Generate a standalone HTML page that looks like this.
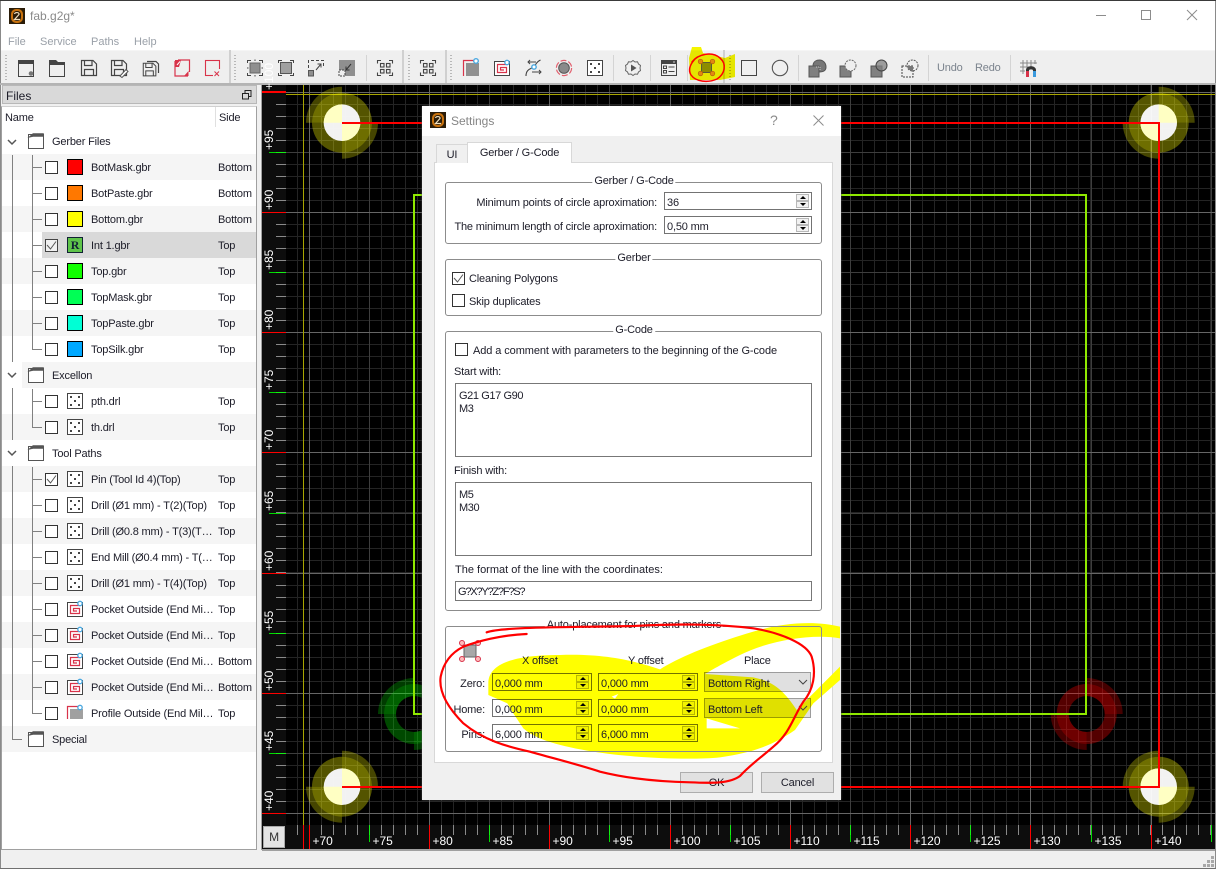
<!DOCTYPE html>
<html lang="en"><head><meta charset="utf-8"><title>fab.g2g*</title>
<style>
*{box-sizing:border-box;margin:0;padding:0}
html,body{width:1216px;height:869px;overflow:hidden;background:#f0f0f0}
body{position:relative;font:11px "Liberation Sans",sans-serif;letter-spacing:-.17px;color:#1c1c28}
.a{position:absolute}
.t{position:absolute;white-space:nowrap;line-height:14px;margin-top:1px}
svg{display:block;overflow:visible}
.r{position:absolute;left:2px;width:254px;height:26px;line-height:28px;white-space:nowrap}
.alt{background:#f5f5f5}
.c{position:absolute;left:43px;top:7px;width:13px;height:13px;border:1px solid #333;background:#fff}
.ic{position:absolute;left:65px;top:5px;width:16px;height:16px}
.sw{position:absolute;left:65px;top:5px;width:16px;height:16px;border:1px solid #000}
.n{position:absolute;left:89px;top:0;max-width:124px;overflow:hidden}
.s{position:absolute;left:216px;top:0}
.fo{position:absolute;left:26px;top:5px;width:16px;height:16px}
.g{position:absolute;left:50px;top:0}
.gb{position:absolute;border:1px solid #8c8c8c;border-radius:3px}
.gt{position:absolute;white-space:nowrap;line-height:14px;background:#fff;padding:0 2px;margin-top:1px;transform:translateX(-50%)}
.in{position:absolute;border:1px solid #777;line-height:16px;padding-left:2px;white-space:nowrap}
.sp{line-height:18px;padding-top:1px;border-color:rgba(0,0,0,.55)}
.sp u{position:absolute;right:2px;width:13px;height:7px;background:rgba(0,0,0,.05);border:1px solid rgba(0,0,0,.24);display:block}
.sp u:first-of-type{top:1px}
.sp u:last-of-type{bottom:1px}
.sp u::after{content:"";position:absolute;left:3px;top:1px;border-left:3px solid transparent;border-right:3px solid transparent}
.sp u:first-of-type::after{border-bottom:3px solid #000}
.sp u:last-of-type::after{border-top:3px solid #000}
.cb{position:absolute;background:rgba(0,0,0,.12);border:1px solid rgba(0,0,0,.3);line-height:20px;padding:1px 0 0 3px;width:107px;height:20px}
.btn{position:absolute;background:#e1e1e1;border:1px solid #adadad;text-align:center;line-height:21px;height:21px}
.tb{position:absolute;top:59px;width:18px;height:18px}
.grip{position:absolute;top:55px;width:3px;height:25px;background-image:linear-gradient(#b8b8b8 1px,transparent 1px);background-size:2px 3px;background-repeat:repeat-y}
.sep{position:absolute;top:55px;width:1px;height:26px;background:#d4d4d4}
.ep{position:absolute;top:50px;width:2px;height:33px;background:#d0d0d0}
</style></head><body>

<svg width="0" height="0" style="position:absolute"><defs>
<g id="fold" fill="none"><path d="M.5 15.500V1.500H15.500V15.500Z" fill="#fff" stroke="#555"/><path d="M.5 4.500L5 .5H15.500V3.500H5Z" fill="#555" stroke="#555" stroke-width=".6"/></g>
<g id="die"><rect x=".5" y=".5" width="15" height="15" fill="#fff" stroke="#444"/><g fill="#444"><rect x="3" y="3" width="2" height="2"/><rect x="11" y="3" width="2" height="2"/><rect x="7" y="7" width="2" height="2"/><rect x="3" y="11" width="2" height="2"/><rect x="11" y="11" width="2" height="2"/></g></g>
<g id="pock"><rect x=".5" y="1.500" width="15" height="14" fill="#fff" stroke="#444"/><path d="M12.500 4.500H3.500V12.500H12.500V7.500H6.500V10H10" fill="none" stroke="#d8334a" stroke-width="1.200"/><circle cx="13" cy="2.500" r="2.200" fill="#fff" stroke="#4aa8e0" stroke-width="1.300"/></g>
<g id="prof"><path d="M.5 14V1.500H11" fill="none" stroke="#d8334a" stroke-width="1.200"/><rect x="3" y="4" width="13" height="10" fill="#a0a0a0"/><circle cx="13" cy="2.500" r="2.200" fill="#fff" stroke="#4aa8e0" stroke-width="1.300"/></g>
<g id="logo"><rect width="16" height="16" fill="#2a1c08"/><rect x="2" y="1" width="12" height="14" rx="5" fill="#c8720e"/><rect x="4" y="3" width="8" height="10" rx="3.500" fill="#2a1c08"/><path d="M5.500 6C6 4 10.500 4 10 6.500L5.500 11.500H11" fill="none" stroke="#f0e0c0" stroke-width="1.200"/></g>
<g id="floppy" fill="none" stroke="#444" stroke-width="1.200"><path d="M1.500 1.500H13L16.500 5V16.500H1.500Z"/><path d="M4.500 1.500V6.500H12V1.500M4.500 16.500V10.500H13.500V16.500"/></g>
<g id="four" fill="none" stroke="#444" stroke-width="1.100"><path d="M.5 3.500V.5H4M12 .5H15.500V3.500M.5 12.500V15.500H4M12 15.500H15.500V12.500"/><rect x="3.500" y="3.500" width="3.500" height="3.500"/><rect x="9.500" y="3.500" width="3.500" height="3.500"/><rect x="3.500" y="9.500" width="3.500" height="3.500"/><rect x="9.500" y="9.500" width="3.500" height="3.500"/></g>
<g id="pad">
<path fill-opacity=".33" d="M0-18A18 18 0 0 1 18 0H30A30 30 0 0 0 0-30Z M0 18A18 18 0 0 1-18 0H-30A30 30 0 0 0 0 30Z"/>
<path fill-opacity=".43" d="M0-18A18 18 0 0 0-18 0H-30A30 30 0 0 1 0-30Z M0 18A18 18 0 0 0 18 0H30A30 30 0 0 1 0 30Z"/>
<path fill-opacity=".27" d="M-30 0H-36A36 36 0 0 1 0-36V-30A30 30 0 0 0-30 0Z M30 0H36A36 36 0 0 1 0 36V30A30 30 0 0 0 30 0Z"/>
</g>
<g id="hole"><circle r="18.300" fill="#fff" fill-opacity=".95"/><path d="M0 0V-18.300A18.300 18.300 0 0 0-18.300 0Z M0 0V18.300A18.300 18.300 0 0 0 18.300 0Z" fill="#ffffc0" fill-opacity=".95"/></g>
</defs></svg>

<!-- window frame -->
<div class="a" style="left:0;top:0;width:1216px;height:1px;background:#3a3a3a"></div>
<div class="a" style="left:0;top:1px;width:1216px;height:49px;background:#fff"></div>
<div class="a" style="left:0;top:1px;width:1px;height:868px;background:#8a8a8a"></div>
<div class="a" style="left:1215px;top:1px;width:1px;height:868px;background:#8a8a8a"></div>
<div class="a" style="left:0;top:868px;width:1216px;height:1px;background:#707070"></div>

<svg class="a" style="left:9px;top:8px;width:16px;height:16px"><use href="#logo"/></svg>
<div class="t" style="left:30px;top:8px;color:#8a8a8a;font-size:12px;letter-spacing:0">fab.g2g*</div>
<div class="t" style="left:8px;top:34px;color:#9aa0a8;letter-spacing:0">File</div>
<div class="t" style="left:40px;top:34px;color:#9aa0a8;letter-spacing:0">Service</div>
<div class="t" style="left:91px;top:34px;color:#9aa0a8;letter-spacing:0">Paths</div>
<div class="t" style="left:134px;top:34px;color:#9aa0a8;letter-spacing:0">Help</div>
<svg class="a" style="left:0;top:0;width:1216px;height:30px" fill="none" stroke="#8c8c8c"><path d="M1096 15.500H1106"/><rect x="1141.500" y="10.500" width="9" height="9"/><path d="M1187 10L1197 20M1197 10L1187 20"/></svg>

<!-- toolbar -->
<div class="a" style="left:1px;top:50px;width:1214px;height:33px;background:#efefef;border-top:1px solid #f5f5f5"></div>
<div class="a" style="left:0;top:83px;width:1216px;height:2px;background:#b4b4b4"></div>
<div class="grip" style="left:5px"></div><div class="ep" style="left:229px"></div>
<div class="grip" style="left:234px"></div><div class="sep" style="left:366px"></div><div class="ep" style="left:402px"></div>
<div class="grip" style="left:408px"></div><div class="ep" style="left:445px"></div>
<div class="grip" style="left:450px"></div><div class="sep" style="left:613px"></div><div class="sep" style="left:650px"></div><div class="sep" style="left:687px"></div><div class="ep" style="left:723px"></div>
<div class="grip" style="left:729px"></div><div class="sep" style="left:798px"></div><div class="sep" style="left:928px"></div><div class="sep" style="left:1010px"></div>

<svg class="tb" style="left:18px"><path d="M.5 2.500H15.500V17.500H.5Z" fill="none" stroke="#444"/><rect y="1" width="16" height="4" fill="#444"/><circle cx="13" cy="14.500" r="2.300" fill="#777"/></svg>
<svg class="tb" style="left:49px"><path d="M.5 3.500H15.500V17.500H.5Z" fill="none" stroke="#444"/><path d="M0 1H7L9 3H16V6H0Z" fill="#444"/></svg>
<svg class="tb" style="left:80px"><use href="#floppy"/></svg>
<svg class="tb" style="left:110px"><use href="#floppy"/><path d="M10 17L16 10.500L18 12.500L12 18.500Z" fill="#fff" stroke="#555"/></svg>
<svg class="tb" style="left:142px"><g transform="translate(0 3) scale(.84)"><use href="#floppy"/></g><path d="M5 2.500H14L16.500 5V14" fill="none" stroke="#444" stroke-width="1.200"/></svg>
<svg class="tb" style="left:174px"><path d="M1 2V17H14M4 1H15.500V13" fill="none" stroke="#d8334a" stroke-width="1.200"/><path d="M1 1H7L5 8H1ZM10 17H14.500V12Z" fill="#d8334a"/><path d="M3 6L6 2.500" stroke="#fff"/></svg>
<svg class="tb" style="left:205px"><rect x=".5" y="1.500" width="14" height="15" fill="none" stroke="#d8334a" stroke-width="1.100"/><rect x="8" y="10" width="9" height="8" fill="#efefef"/><path d="M9.500 12.500L14 17M14 12.500L9.500 17" stroke="#d8334a"/></svg>

<svg class="tb" style="left:247px"><path d="M.5 4V1.500H4M12 1.500H15.500V4M.5 14V16.500H4M12 16.500H15.500V14" fill="none" stroke="#444"/><rect x="3" y="4" width="10" height="10" fill="#8f8f8f" stroke="#666"/><path d="M8 .5V2M8 16V17.500M0 9H1.500M14.500 9H16" stroke="#444"/></svg>
<svg class="tb" style="left:278px"><path d="M.5 4V1.500H4M12 1.500H15.500V4M.5 14V16.500H4M12 16.500H15.500V14" fill="none" stroke="#444"/><rect x="2.500" y="3.500" width="11" height="11" fill="#a0a0a0" stroke="#555"/></svg>
<svg class="tb" style="left:308px"><path d="M.5 9V1.500H15.500V9" fill="none" stroke="#444" stroke-dasharray="3 2"/><rect x=".5" y="11.500" width="5" height="5.500" fill="#8f8f8f" stroke="#555"/><path d="M8 11L13 5M9.500 5H13V8.500" fill="none" stroke="#444"/></svg>
<svg class="tb" style="left:339px"><rect x="0" y="1" width="16" height="16" fill="#8f8f8f"/><rect x="0" y="11" width="6" height="6" fill="#efefef" stroke="#444" stroke-dasharray="2 1"/><path d="M12 5L7 11M7 7.500V11H10.500" fill="none" stroke="#333"/></svg>
<svg class="tb" style="left:377px"><g transform="translate(0 1)"><use href="#four"/></g></svg>
<svg class="tb" style="left:420px"><g transform="translate(0 1)"><use href="#four"/></g></svg>

<svg class="tb" style="left:463px"><path d="M.5 17V1.500H12" fill="none" stroke="#d8334a" stroke-width="1.200"/><rect x="3" y="4" width="13" height="13" fill="#909090"/><circle cx="13" cy="2" r="2.300" fill="#fff" stroke="#4aa8e0" stroke-width="1.400"/></svg>
<svg class="tb" style="left:494px"><g transform="translate(0 1)"><use href="#pock"/></g></svg>
<svg class="tb" style="left:525px"><path d="M1 17C1 10 6 10 8.500 8C11 6 11 3 15.500 1" fill="none" stroke="#444" stroke-width="1.100"/><circle cx="9" cy="8" r="2.200" fill="#fff" stroke="#4aa8e0" stroke-width="1.400"/><path d="M11 3H3M5 1L3 3L5 5M7 13H16M14 11L16 13L14 15" fill="none" stroke="#444"/></svg>
<svg class="tb" style="left:555px"><circle cx="9" cy="9" r="5.300" fill="#8a8a8a" stroke="#555"/><circle cx="9" cy="9" r="7.600" fill="none" stroke="#e2606e" stroke-width="1.200" stroke-dasharray="6 2"/></svg>
<svg class="tb" style="left:587px"><g transform="translate(0 1)"><use href="#die"/></g></svg>
<svg class="tb" style="left:624px"><path d="M9 1.500L11 3L13.500 2.800L14.500 5L16.500 6.500L16 9L16.500 11.500L14.500 13L13.500 15.200L11 15L9 16.500L7 15L4.500 15.200L3.500 13L1.500 11.500L2 9L1.500 6.500L3.500 5L4.500 2.800L7 3Z" fill="none" stroke="#666"/><path d="M7 5.500L12.500 9L7 12.500Z" fill="#555"/></svg>
<svg class="tb" style="left:661px"><rect x=".5" y="1.500" width="15" height="15" fill="none" stroke="#444"/><rect y="1" width="16" height="4" fill="#444"/><path d="M12 3h2" stroke="#ccc"/><rect x="2.500" y="7" width="3" height="2.500" fill="none" stroke="#444"/><rect x="2.500" y="11.500" width="3" height="2.500" fill="none" stroke="#444"/><path d="M7.500 8H13.500M7.500 12.500H13.500" stroke="#444"/></svg>

<svg class="tb" style="left:741px"><rect x=".5" y="1.500" width="15" height="15" fill="none" stroke="#444"/></svg>
<svg class="tb" style="left:771px"><circle cx="9" cy="9" r="7.700" fill="none" stroke="#555" stroke-width="1.100"/></svg>
<svg class="tb" style="left:808px"><rect x="1" y="7" width="10" height="11" fill="#808080" stroke="#555"/><path d="M5 7C5 2 9 1 11.500 1C15 1 18 4 18 8C18 11 16 13 11 13V7Z" fill="#777" stroke="#555"/><path d="M8 8h4v4" fill="none" stroke="#ccc" stroke-dasharray="1 1"/></svg>
<svg class="tb" style="left:839px"><rect x="1" y="7" width="11" height="11" fill="#808080" stroke="#555"/><circle cx="11.500" cy="6.500" r="5.500" fill="#efefef" stroke="#666" stroke-dasharray="2 1"/></svg>
<svg class="tb" style="left:870px"><rect x="1" y="7" width="11" height="11" fill="#808080" stroke="#555"/><circle cx="11.500" cy="6.500" r="5.500" fill="#808080" fill-opacity=".75" stroke="#444"/></svg>
<svg class="tb" style="left:901px"><rect x="1" y="7" width="11" height="11" fill="none" stroke="#444" stroke-dasharray="2 1"/><circle cx="11.500" cy="6.500" r="5.500" fill="none" stroke="#555" stroke-dasharray="2 1"/><path d="M6.500 7H12V12C9 12 7 10 6.500 7Z" fill="#777"/></svg>
<div class="t" style="left:937px;top:60px;color:#7b838d">Undo</div>
<div class="t" style="left:975px;top:60px;color:#7b838d">Redo</div>
<svg class="tb" style="left:1020px"><path d="M3 1V15M7 1V15M11 1V9M15 1V5M0 4H17M0 8H11M0 12H5" stroke="#888" fill="none"/><path d="M6 16V11C6 6 16 6 16 11V16H13V11.500C13 10 9 10 9 11.500V16Z" fill="#333"/><rect x="6" y="12" width="3" height="6" fill="#d8334a"/><rect x="13" y="12" width="3" height="6" fill="#3a9ade"/></svg>

<!-- left dock -->
<div class="a" style="left:2px;top:85px;width:255px;height:19px;background:#d9d9d9;border:1px solid #b8b8b8"></div>
<div class="t" style="left:6px;top:88px;font-size:12px;letter-spacing:0">Files</div>
<svg class="a" style="left:242px;top:90px;width:10px;height:10px" fill="none" stroke="#222"><rect x="3" y=".5" width="6" height="6" fill="#d9d9d9"/><rect x=".5" y="3.500" width="6" height="5.500" fill="#d9d9d9"/></svg>
<div class="a" style="left:1px;top:106px;width:256px;height:744px;background:#fff;border:1px solid #a0a0a0;border-top-color:#d0d0d0"></div>
<div class="t" style="left:5px;top:110px">Name</div>
<div class="a" style="left:215px;top:107px;width:1px;height:20px;background:#e0e0e0"></div>
<div class="t" style="left:219px;top:110px">Side</div>

<div class="r alt" style="top:154px"><i class="c"></i><b class="sw" style="background:#f00"></b><span class="n">BotMask.gbr</span><span class="s">Bottom</span></div>
<div class="r" style="top:180px"><i class="c"></i><b class="sw" style="background:#ff7800"></b><span class="n">BotPaste.gbr</span><span class="s">Bottom</span></div>
<div class="r alt" style="top:206px"><i class="c"></i><b class="sw" style="background:#ff0"></b><span class="n">Bottom.gbr</span><span class="s">Bottom</span></div>
<div class="r" style="top:232px"><div class="a" style="left:40px;top:0;width:214px;height:26px;background:#d9d9d9"></div><i class="c" style="background:#f0f0f0;border-color:#444"><svg width="11" height="11"><path d="M1 5L4.500 9L10 1.500" fill="none" stroke="#555"/></svg></i><b class="sw" style="background:#5fc44a;border-color:#123;color:#123;font:bold 12px/14px 'Liberation Serif',serif;text-align:center">R</b><span class="n">Int 1.gbr</span><span class="s">Top</span></div>
<div class="r alt" style="top:258px"><i class="c"></i><b class="sw" style="background:#1f0"></b><span class="n">Top.gbr</span><span class="s">Top</span></div>
<div class="r" style="top:284px"><i class="c"></i><b class="sw" style="background:#00ff55"></b><span class="n">TopMask.gbr</span><span class="s">Top</span></div>
<div class="r alt" style="top:310px"><i class="c"></i><b class="sw" style="background:#00ffd5"></b><span class="n">TopPaste.gbr</span><span class="s">Top</span></div>
<div class="r" style="top:336px"><i class="c"></i><b class="sw" style="background:#00a8ff"></b><span class="n">TopSilk.gbr</span><span class="s">Top</span></div>
<div class="r" style="top:128px"><svg class="fo"><use href="#fold"/></svg><span class="g">Gerber Files</span></div>
<div class="r alt" style="top:362px;left:22px;width:234px"><svg class="fo" style="left:6px"><use href="#fold"/></svg><span class="g" style="left:30px">Excellon</span></div>
<div class="r" style="top:388px"><i class="c"></i><svg class="ic"><use href="#die"/></svg><span class="n">pth.drl</span><span class="s">Top</span></div>
<div class="r alt" style="top:414px"><i class="c"></i><svg class="ic"><use href="#die"/></svg><span class="n">th.drl</span><span class="s">Top</span></div>
<div class="r" style="top:440px"><svg class="fo"><use href="#fold"/></svg><span class="g">Tool Paths</span></div>
<div class="r alt" style="top:466px"><i class="c"><svg width="11" height="11"><path d="M1 5L4.500 9L10 1.500" fill="none" stroke="#555"/></svg></i><svg class="ic"><use href="#die"/></svg><span class="n">Pin (Tool Id 4)(Top)</span><span class="s">Top</span></div>
<div class="r" style="top:492px"><i class="c"></i><svg class="ic"><use href="#die"/></svg><span class="n">Drill (Ø1 mm) - T(2)(Top)</span><span class="s">Top</span></div>
<div class="r alt" style="top:518px"><i class="c"></i><svg class="ic"><use href="#die"/></svg><span class="n">Drill (Ø0.8 mm) - T(3)(T…</span><span class="s">Top</span></div>
<div class="r" style="top:544px"><i class="c"></i><svg class="ic"><use href="#die"/></svg><span class="n">End Mill (Ø0.4 mm) - T(…</span><span class="s">Top</span></div>
<div class="r alt" style="top:570px"><i class="c"></i><svg class="ic"><use href="#die"/></svg><span class="n">Drill (Ø1 mm) - T(4)(Top)</span><span class="s">Top</span></div>
<div class="r" style="top:596px"><i class="c"></i><svg class="ic"><use href="#pock"/></svg><span class="n">Pocket Outside (End Mi…</span><span class="s">Top</span></div>
<div class="r alt" style="top:622px"><i class="c"></i><svg class="ic"><use href="#pock"/></svg><span class="n">Pocket Outside (End Mi…</span><span class="s">Top</span></div>
<div class="r" style="top:648px"><i class="c"></i><svg class="ic"><use href="#pock"/></svg><span class="n">Pocket Outside (End Mi…</span><span class="s">Bottom</span></div>
<div class="r alt" style="top:674px"><i class="c"></i><svg class="ic"><use href="#pock"/></svg><span class="n">Pocket Outside (End Mi…</span><span class="s">Bottom</span></div>
<div class="r" style="top:700px"><i class="c"></i><svg class="ic"><use href="#prof"/></svg><span class="n">Profile Outside (End Mil…</span><span class="s">Top</span></div>
<div class="r alt" style="top:726px"><svg class="fo"><use href="#fold"/></svg><span class="g">Special</span></div>

<svg class="a" style="left:0;top:0;width:262px;height:760px" fill="none" stroke="#808080" shape-rendering="crispEdges">
<path d="M12.500 155V362M12.500 388V440M12.500 466V739.500H22"/>
<path d="M32.500 155V349.500H42M33 167.500H42M33 193.500H42M33 219.500H42M33 245.500H42M33 271.500H42M33 297.500H42M33 323.500H42"/>
<path d="M32.500 389V427.500H42M33 401.500H42"/>
<path d="M32.500 467V713.500H42M33 479.500H42M33 505.500H42M33 531.500H42M33 557.500H42M33 583.500H42M33 609.500H42M33 635.500H42M33 661.500H42M33 687.500H42"/>
</svg>
<svg class="a" style="left:0;top:0;width:30px;height:470px" fill="none" stroke="#555" stroke-width="1.500"><path d="M8 140L12 144L16 140M8 373L12 377L16 373M8 451L12 455L16 451"/></svg>

<!-- canvas -->
<div class="a" style="left:261px;top:85px;width:1px;height:765px;background:#a0a0a0"></div>
<div class="a" style="left:262px;top:85px;width:953px;height:764px;background:#000"></div>
<div class="a" style="left:286px;top:85px;width:374px;height:740px;background:linear-gradient(90deg,#242424 1px,transparent 1px) 11px 0/12px 100%"></div>
<div class="a" style="left:660px;top:85px;width:555px;height:740px;background:linear-gradient(90deg,#242424 1px,transparent 1px) 10px 0/12px 100%"></div>
<div class="a" style="left:286px;top:85px;width:929px;height:488px;background:linear-gradient(#242424 1px,transparent 1px) 0 7px/100% 12px"></div>
<div class="a" style="left:286px;top:573px;width:929px;height:252px;background:linear-gradient(#242424 1px,transparent 1px) 0 0/100% 12px"></div>

<svg class="a" style="left:0;top:0;width:1216px;height:869px">
<g fill="none" shape-rendering="crispEdges">
<path stroke="#3e3e3e" d="M369.500 85V825M489.500 85V825M609.500 85V825M730.500 85V825M850.500 85V825M970.500 85V825M1091.500 85V825M1211.500 85V825M286 152.500H1215M286 272.500H1215M286 392.500H1215M286 513.500H1215M286 633.500H1215M286 753.500H1215"/>
<path stroke="#666" d="M309.500 85V825M429.500 85V825M549.500 85V825M670.500 85V825M790.500 85V825M910.500 85V825M1030.500 85V825M1151.500 85V825M286 92.500H1215M286 212.500H1215M286 332.500H1215M286 452.500H1215M286 573.500H1215M286 693.500H1215M286 813.500H1215"/>
<path stroke="#a8a500" d="M303.500 85V825M286 94.500H1215"/>
</g>

<g fill="#ff0">
<use href="#pad" transform="translate(342 122.700)"/><use href="#hole" transform="translate(342 122.700)"/>
<use href="#pad" transform="translate(1158.700 122.700) scale(-1 1)"/><use href="#hole" transform="translate(1158.700 122.700) scale(-1 1)"/>
<use href="#pad" transform="translate(342 786.700) scale(-1 1)"/><use href="#hole" transform="translate(342 786.700) scale(-1 1)"/>
<use href="#pad" transform="translate(1158.700 786.700)"/><use href="#hole" transform="translate(1158.700 786.700)"/>
</g>
<g opacity=".88"><use href="#pad" fill="#0f0" transform="translate(414 714)"/></g>
<use href="#pad" fill="#f00" transform="translate(1086.700 714) scale(-1 1)"/>

<path d="M414 195H1086V714H414Z" fill="none" stroke="#8fe800" stroke-width="2" shape-rendering="crispEdges"/>
<path d="M342 123H1159V787H342" fill="none" stroke="#f00" stroke-width="2" shape-rendering="crispEdges"/>
</svg>

<!-- left ruler -->
<div class="a" style="left:262px;top:85px;width:24px;height:740px;background:#0d0d0d"></div>
<div class="a" style="left:276px;top:85px;width:10px;height:488px;background:linear-gradient(#8a8a8a 1px,transparent 1px) 0 7px/100% 12px"></div>
<div class="a" style="left:276px;top:573px;width:10px;height:252px;background:linear-gradient(#8a8a8a 1px,transparent 1px) 0 0/100% 12px"></div>
<!-- bottom ruler -->
<div class="a" style="left:262px;top:825px;width:953px;height:24px;background:#0d0d0d"></div>
<div class="a" style="left:286px;top:825px;width:374px;height:10px;background:linear-gradient(90deg,#8a8a8a 1px,transparent 1px) 11px 0/12px 100%"></div>
<div class="a" style="left:660px;top:825px;width:555px;height:10px;background:linear-gradient(90deg,#8a8a8a 1px,transparent 1px) 10px 0/12px 100%"></div>

<svg class="a" style="left:0;top:0;width:1216px;height:869px;letter-spacing:0" font-family="Liberation Sans" font-size="12" fill="#fff">
<g fill="none" shape-rendering="crispEdges">
<path stroke="#0f0" stroke-opacity=".85" d="M269 152.500H286M269 272.500H286M269 392.500H286M269 513.500H286M269 633.500H286M269 753.500H286M369.500 825V842M489.500 825V842M609.500 825V842M730.500 825V842M850.500 825V842M970.500 825V842M1091.500 825V842M1211.500 825V842"/>
<path stroke="#f00" d="M262 212.500H286M262 332.500H286M262 452.500H286M262 573.500H286M262 693.500H286M262 813.500H286M303.500 825V849M309.500 825V849M429.500 825V849M549.500 825V849M670.500 825V849M790.500 825V849M910.500 825V849M1030.500 825V849M1151.500 825V849"/>
<path stroke="#f00" stroke-width="2" d="M262 92H286"/>
</g>
<text transform="translate(273 90) rotate(-90)">+100</text>
<text transform="translate(273 150) rotate(-90)">+95</text>
<text transform="translate(273 210) rotate(-90)">+90</text>
<text transform="translate(273 270) rotate(-90)">+85</text>
<text transform="translate(273 330) rotate(-90)">+80</text>
<text transform="translate(273 390) rotate(-90)">+75</text>
<text transform="translate(273 450) rotate(-90)">+70</text>
<text transform="translate(273 511) rotate(-90)">+65</text>
<text transform="translate(273 571) rotate(-90)">+60</text>
<text transform="translate(273 631) rotate(-90)">+55</text>
<text transform="translate(273 691) rotate(-90)">+50</text>
<text transform="translate(273 751) rotate(-90)">+45</text>
<text transform="translate(273 811) rotate(-90)">+40</text>
<text x="312.500" y="845">+70</text><text x="372.500" y="845">+75</text><text x="432.500" y="845">+80</text><text x="492.500" y="845">+85</text><text x="552.500" y="845">+90</text><text x="612.500" y="845">+95</text><text x="673.500" y="845">+100</text><text x="733.500" y="845">+105</text><text x="793.500" y="845">+110</text><text x="853.500" y="845">+115</text><text x="913.500" y="845">+120</text><text x="973.500" y="845">+125</text><text x="1033.500" y="845">+130</text><text x="1094.500" y="845">+135</text><text x="1154.500" y="845">+140</text>
</svg>
<div class="a" style="left:263px;top:826px;width:22px;height:22px;background:#e4e4e4;border:1px solid #aaa;text-align:center;line-height:20px;font-size:12px;color:#333">M</div>

<!-- status bar -->
<div class="a" style="left:262px;top:849px;width:953px;height:2px;background:#a0a0a0"></div>
<svg class="a" style="left:1203px;top:856px;width:12px;height:12px" fill="#a8a8a8"><rect x="8" y="0" width="3" height="3"/><rect x="4" y="4" width="3" height="3"/><rect x="8" y="4" width="3" height="3"/><rect x="0" y="8" width="3" height="3"/><rect x="4" y="8" width="3" height="3"/><rect x="8" y="8" width="3" height="3"/></svg>

<!-- dialog -->
<div class="a" style="left:422px;top:106px;width:419px;height:694px;background:#f0f0f0;box-shadow:0 0 2px #555"></div>
<div class="a" style="left:422px;top:106px;width:419px;height:30px;background:#fff"></div>
<svg class="a" style="left:430px;top:112px;width:16px;height:16px"><use href="#logo"/></svg>
<div class="t" style="left:451px;top:113px;color:#858585;font-size:12px;letter-spacing:0">Settings</div>
<div class="t" style="left:770px;top:112px;color:#8a8a8a;font-size:14px">?</div>
<svg class="a" style="left:813px;top:115px;width:11px;height:11px" fill="none" stroke="#8c8c8c"><path d="M.5 .5L10.500 10.500M10.500 .5L.5 10.500"/></svg>

<div class="a" style="left:434px;top:162px;width:399px;height:601px;background:#fff;border:1px solid #d8d8d8"></div>
<div class="a" style="left:436px;top:144px;width:32px;height:19px;background:#f0f0f0;border:1px solid #d8d8d8;border-bottom:0;text-align:center;line-height:20px">UI</div>
<div class="a" style="left:467px;top:142px;width:105px;height:21px;background:#fff;border:1px solid #d8d8d8;border-bottom:0;text-align:center;line-height:20px">Gerber / G-Code</div>

<div class="gb" style="left:445px;top:182px;width:377px;height:62px"></div>
<div class="gt" style="left:634px;top:173px">Gerber / G-Code</div>
<div class="t" style="right:559px;top:195px">Minimum points of circle aproximation:</div>
<div class="t" style="right:559px;top:219px">The minimum length of circle aproximation:</div>
<div class="in sp" style="left:664px;top:192px;width:148px;height:18px">36<u></u><u></u></div>
<div class="in sp" style="left:664px;top:216px;width:148px;height:18px">0,50 mm<u></u><u></u></div>

<div class="gb" style="left:445px;top:259px;width:377px;height:57px"></div>
<div class="gt" style="left:634px;top:250px">Gerber</div>
<div class="c" style="left:452px;top:272px"><svg width="11" height="11"><path d="M1 5L4.500 9L10 1.500" fill="none" stroke="#555"/></svg></div>
<div class="t" style="left:469px;top:271px">Cleaning Polygons</div>
<div class="c" style="left:452px;top:294px"></div>
<div class="t" style="left:469px;top:294px">Skip duplicates</div>

<div class="gb" style="left:445px;top:331px;width:377px;height:280px"></div>
<div class="gt" style="left:634px;top:322px">G-Code</div>
<div class="c" style="left:455px;top:343px"></div>
<div class="t" style="left:473px;top:343px;letter-spacing:-.09px">Add a comment with parameters to the beginning of the G-code</div>
<div class="t" style="left:454px;top:364px">Start with:</div>
<div class="in" style="left:455px;top:383px;width:357px;height:74px;padding:6px 3px;line-height:13px;letter-spacing:-.4px">G21 G17 G90<br>M3</div>
<div class="t" style="left:454px;top:463px">Finish with:</div>
<div class="in" style="left:455px;top:482px;width:357px;height:74px;padding:6px 3px;line-height:13px;letter-spacing:-.4px">M5<br>M30</div>
<div class="t" style="left:455px;top:562px;letter-spacing:0">The format of the line with the coordinates:</div>
<div class="in" style="left:455px;top:581px;width:357px;height:20px;line-height:20px;letter-spacing:-1.200px">G?X?Y?Z?F?S?</div>

<!-- yellow marker sits under the controls so the text stays on top -->
<svg class="a" style="left:0;top:0;width:1216px;height:869px">
<g transform="translate(420 600) scale(.33333)" fill="#ff0" fill-rule="evenodd">
<path d="M205 250C205 200 260 165 420 165C560 160 650 185 720 208C780 170 880 130 1000 95C1080 70 1180 60 1260 80L1260 115C1180 100 1050 120 960 165C880 205 860 220 855 222L1000 232C1060 245 1090 270 1130 330L1260 200V240L1180 310L1125 390C1060 435 1000 458 900 472C800 482 620 472 520 455C420 438 350 420 310 385L280 340L262 310L205 285Z M860 355L960 385L860 385Z M575 290L595 282L585 296Z"/>
</g>
</svg>

<div class="gb" style="left:445px;top:626px;width:377px;height:126px"></div>
<div class="gt" style="left:634px;top:617px">Auto-placement for pins and markers</div>
<svg class="a" style="left:459px;top:640px;width:24px;height:24px"><rect x="5" y="5" width="12" height="12" fill="#a8a8a8" stroke="#666"/><g fill="#fbb" stroke="#d8334a"><circle cx="3" cy="3" r="2.500"/><circle cx="19" cy="3" r="2.500"/><circle cx="3" cy="19" r="2.500"/><circle cx="19" cy="19" r="2.500"/></g></svg>
<div class="t" style="left:522px;top:653px">X offset</div>
<div class="t" style="left:628px;top:653px">Y offset</div>
<div class="t" style="left:744px;top:653px">Place</div>
<div class="t" style="right:731px;top:676px">Zero:</div>
<div class="t" style="right:731px;top:702px">Home:</div>
<div class="t" style="right:731px;top:727px">Pins:</div>
<div class="in sp" style="left:492px;top:673px;width:100px;height:18px">0,000 mm<u></u><u></u></div>
<div class="in sp" style="left:598px;top:673px;width:100px;height:18px">0,000 mm<u></u><u></u></div>
<div class="in sp" style="left:492px;top:699px;width:100px;height:18px">0,000 mm<u></u><u></u></div>
<div class="in sp" style="left:598px;top:699px;width:100px;height:18px">0,000 mm<u></u><u></u></div>
<div class="in sp" style="left:492px;top:724px;width:100px;height:18px">6,000 mm<u></u><u></u></div>
<div class="in sp" style="left:598px;top:724px;width:100px;height:18px">6,000 mm<u></u><u></u></div>
<div class="cb" style="left:704px;top:672px">Bottom Right<svg class="a" style="left:93px;top:6px;width:10px;height:6px" fill="none" stroke="#444"><path d="M1 1L5 5L9 1"/></svg></div>
<div class="cb" style="left:704px;top:698px">Bottom Left<svg class="a" style="left:93px;top:6px;width:10px;height:6px" fill="none" stroke="#444"><path d="M1 1L5 5L9 1"/></svg></div>
<div class="btn" style="left:680px;top:772px;width:73px">OK</div>
<div class="btn" style="left:761px;top:772px;width:73px">Cancel</div>

<!-- toolbar highlight -->
<svg class="a" style="left:0;top:0;width:1216px;height:100px;mix-blend-mode:multiply;pointer-events:none">
<path d="M689 58L692 47L701 47L703 53L725 58L735 54L735 77L720 80L690 80Z" fill="#f5f500"/>
</svg>
<!-- red pen scribbles -->
<svg class="a" style="left:0;top:0;width:1216px;height:869px" fill="none" stroke="#f00" stroke-linecap="round">
<g transform="translate(420 600) scale(.33333)" stroke-width="6.500">
<path d="M200 97C250 80 440 82 640 78C760 72 880 70 1000 85C1080 98 1160 130 1175 170C1190 220 1180 270 1150 305C1120 350 1110 400 1060 440C1020 475 990 495 960 528C930 550 880 550 810 547C720 545 620 535 540 515C480 495 400 475 330 455C260 440 190 420 130 370C90 330 55 280 62 230C70 190 90 160 130 140C170 125 240 105 320 102"/>
</g>
<path d="M692 62C698 54 712 51 720 58C727 64 725 74 717 79C708 83 696 82 691 75C688 70 690 64 696 58" stroke-width="1.500"/>
</svg>
<svg class="a" style="left:697px;top:58px;width:20px;height:20px"><rect x="4.500" y="4.500" width="10" height="10" fill="#8d8d00" stroke="#444" stroke-width=".8"/><g fill="#e08a10" stroke="#b5560c" stroke-width=".6"><circle cx="3.500" cy="3.500" r="2.300"/><circle cx="15.500" cy="3.500" r="2.300"/><circle cx="3.500" cy="15.500" r="2.300"/><circle cx="15.500" cy="15.500" r="2.300"/></g></svg>
</body></html>
